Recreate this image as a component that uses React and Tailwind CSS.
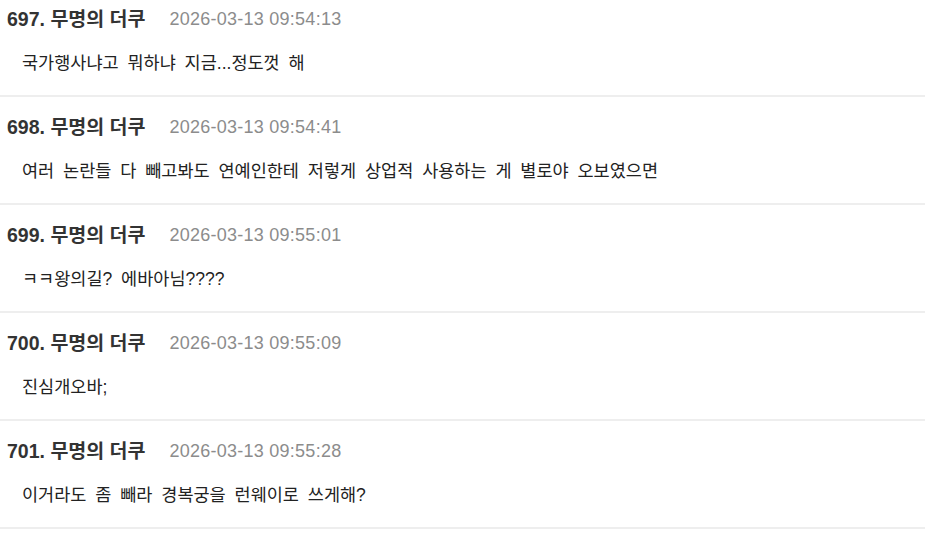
import React from "react";

const posts = [
  { no: "697", time: "2026-03-13 09:54:13", body: "국가행사냐고 뭐하냐 지금...정도껏 해" },
  { no: "698", time: "2026-03-13 09:54:41", body: "여러 논란들 다 빼고봐도 연예인한테 저렇게 상업적 사용하는 게 별로야 오보였으면" },
  { no: "699", time: "2026-03-13 09:55:01", body: "ㅋㅋ왕의길? 에바아님????" },
  { no: "700", time: "2026-03-13 09:55:09", body: "진심개오바;" },
  { no: "701", time: "2026-03-13 09:55:28", body: "이거라도 좀 빼라 경복궁을 런웨이로 쓰게해?" },
];

export default function App() {
  return (
    <div className="w-[925px] h-[542px] overflow-hidden bg-white font-['Liberation_Sans','Noto_Sans_CJK_KR',sans-serif]">
      {posts.map((p, i) => (
        <div
          key={p.no}
          className={`${i === 0 ? "pt-[7px]" : "pt-[18px]"} pb-[20px] border-b-2 border-[#eeeeee]`}
        >
          <div className="flex items-center h-[24px] pl-[7px]">
            <span className="text-[19.5px] font-bold text-[#333333] leading-[24px]">
              {p.no}. 무명의 더쿠
            </span>
            <span className="ml-[24px] text-[18px] tracking-[0.25px] text-[#8c8c8c] leading-[24px]">{p.time}</span>
          </div>
          <div className="mt-[20px] pl-[22px] h-[24px] text-[17.5px] leading-[24px] text-[#222222] [word-spacing:4px]">
            {p.body}
          </div>
        </div>
      ))}
    </div>
  );
}
